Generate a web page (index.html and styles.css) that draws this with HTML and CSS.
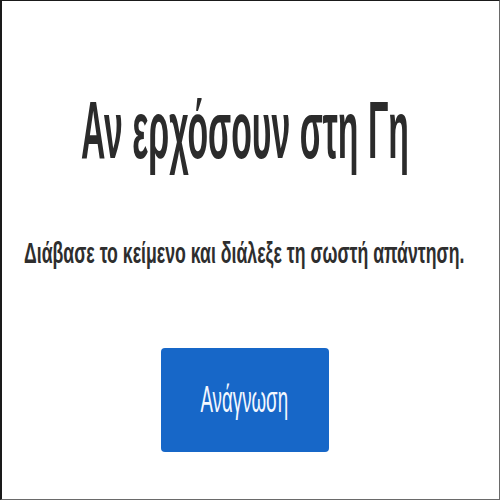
FILE: index.html
```html
<!DOCTYPE html>
<html lang="el">
<head>
<meta charset="utf-8">
<title>Αν ερχόσουν στη Γη</title>
<link rel="stylesheet" href="styles.css">
</head>
<body>
<main class="frame">
  <h1 class="title"><span class="squeeze">Αν ερχόσουν στη Γη</span></h1>
  <p class="lead"><span class="squeeze">Διάβασε το κείμενο και διάλεξε τη σωστή απάντηση.</span></p>
  <button class="start" type="button"><span class="squeeze">Ανάγνωση</span></button>
</main>
</body>
</html>
```

FILE: styles.css
```css
html, body {
  margin: 0;
  padding: 0;
  background: #ffffff;
}

.frame {
  box-sizing: border-box;
  width: 500px;
  height: 500px;
  border-top: 1px solid #1a1a1a;
  border-left: 2px solid #1a1a1a;
  border-right: 1px solid #6a6a6a;
  border-bottom: 1px solid #6a6a6a;
  padding: 88px 12px 0 0;
  display: flex;
  flex-direction: column;
  align-items: center;
  overflow: hidden;
  font-family: "Liberation Sans", Arial, sans-serif;
}

.title {
  margin: 0;
  display: flex;
  justify-content: center;
  font-size: 82px;
  line-height: 82px;
  font-weight: bold;
  color: #2b2b2b;
  white-space: nowrap;
}

.title .squeeze {
  transform: scaleX(0.412);
}

.lead {
  margin: 67px 0 0;
  display: flex;
  justify-content: center;
  font-size: 30px;
  line-height: 30px;
  font-weight: bold;
  color: #2e2e2e;
  white-space: nowrap;
}

.lead .squeeze {
  transform: scaleX(0.59);
}

.squeeze {
  display: inline-block;
  flex-shrink: 0;
  transform-origin: center;
}

.start {
  margin-top: 80px;
  width: 168px;
  height: 104px;
  border: none;
  border-radius: 4px;
  background: #1767c8;
  color: #f4f8ff;
  font-family: "Liberation Sans", Arial, sans-serif;
  font-size: 36px;
  display: flex;
  align-items: center;
  justify-content: center;
  padding: 0;
  white-space: nowrap;
}

.start .squeeze {
  transform: scaleX(0.52);
}
```
